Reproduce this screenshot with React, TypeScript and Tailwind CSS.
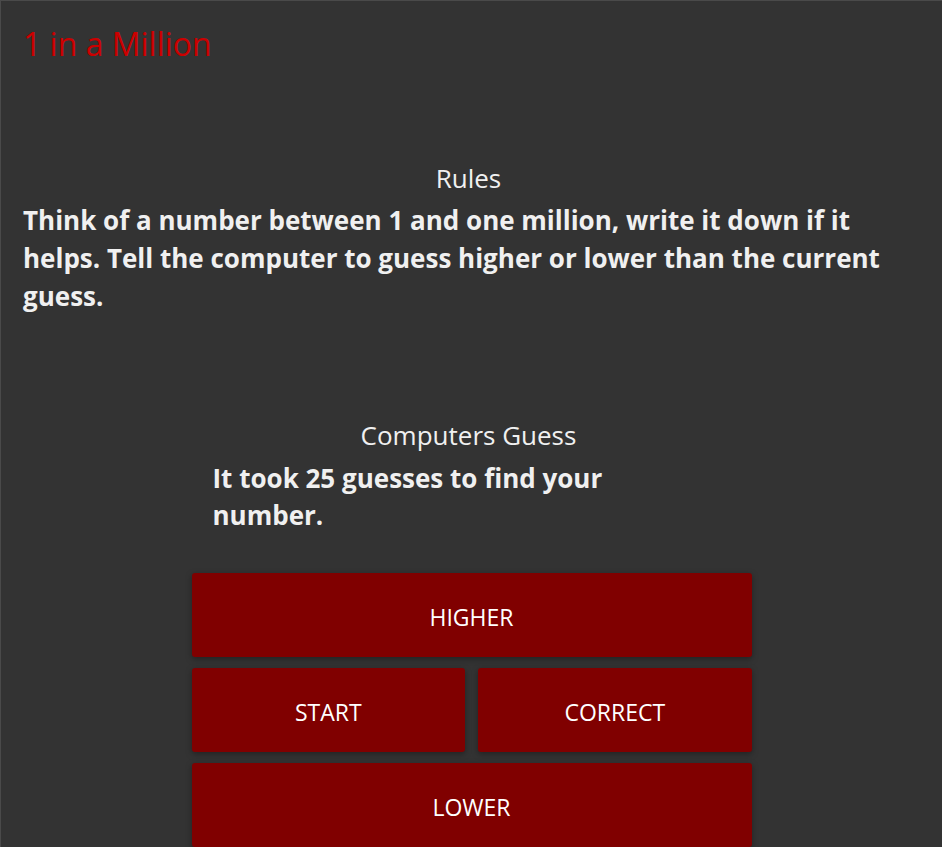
export default function App() {
  return (
    <div
      className="h-[847px] w-[942px] overflow-hidden border-t border-l border-[#4a4a4a] bg-[#333333] text-[#f0f0f0]"
      style={{ fontFamily: '"Open Sans", "Noto Sans", sans-serif' }}
    >
      {/* Header */}
      <header className="px-[22px] pt-[23px]">
        <h1 className="text-[32px] leading-[40px] font-normal text-[#cc0000]">1 in a Million</h1>
      </header>

      {/* Rules */}
      <section className="mt-[99px] px-[22px]">
        <h2 className="pr-[6px] text-center text-[26px] leading-[30px] font-normal">Rules</h2>
        <p className="mt-[8px] text-[26px] leading-[38px] font-bold">
          Think of a number between 1 and one million, write it down if it helps. Tell the computer to guess higher or
          lower than the current guess.
        </p>
      </section>

      {/* Game */}
      <section className="mt-[105px] flex flex-col items-center">
        <h2 className="pr-[6px] text-center text-[26px] leading-[30px] font-normal">Computers Guess</h2>
        <div className="mt-[10px] w-[560px] pl-[21px]">
          <p className="w-[440px] text-[26px] leading-[37px] font-bold">It took 25 guesses to find your number.</p>
        </div>

        <div className="mt-[39px] grid w-[560px] grid-cols-2 gap-x-[13px] gap-y-[11px]">
          <button className="col-span-2 h-[84px] rounded-[3px] bg-[#800000] pt-[4px] text-[23px] text-white shadow-[0_2px_6px_rgba(0,0,0,0.35)]">
            HIGHER
          </button>
          <button className="h-[84px] rounded-[3px] bg-[#800000] pt-[4px] text-[23px] text-white shadow-[0_2px_6px_rgba(0,0,0,0.35)]">
            START
          </button>
          <button className="h-[84px] rounded-[3px] bg-[#800000] pt-[4px] text-[23px] text-white shadow-[0_2px_6px_rgba(0,0,0,0.35)]">
            CORRECT
          </button>
          <button className="col-span-2 h-[84px] rounded-[3px] bg-[#800000] pt-[4px] text-[23px] text-white shadow-[0_2px_6px_rgba(0,0,0,0.35)]">
            LOWER
          </button>
        </div>
      </section>
    </div>
  );
}
